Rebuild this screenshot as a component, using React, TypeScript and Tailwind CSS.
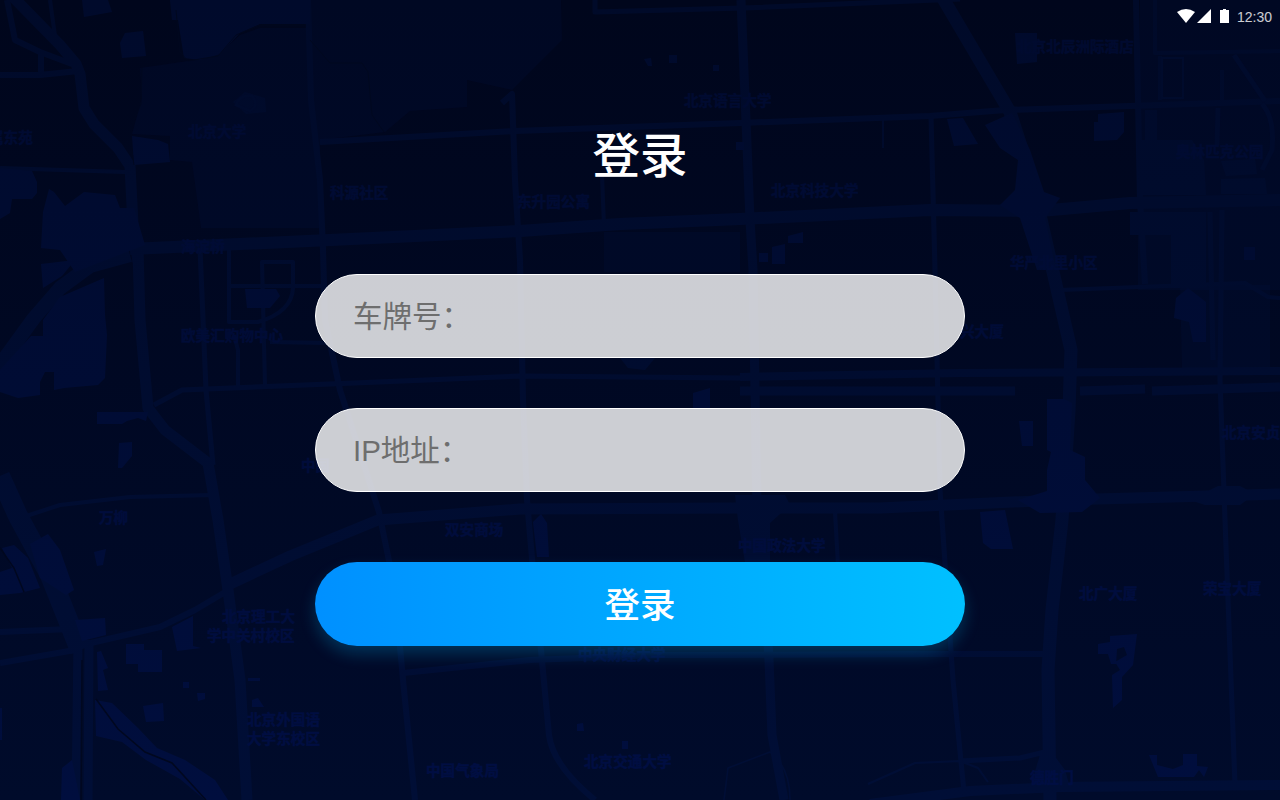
import React from "react";

type Road = { d: string; w: number };
type Label = { x: number; y: number; text: string };

const roads: Road[] = [
  { d: "M12 -4L60 45L76 64L80 74L84 108L94 124L118 148L130 166L133 225L138 262", w: 11 },
  { d: "M7 0L15 40L40 52L72 64", w: 6 },
  { d: "M50 0L55 36", w: 4 },
  { d: "M0 75H40L78 71", w: 6 },
  { d: "M41 54V74", w: 6 },
  { d: "M0 168L125 172", w: 4 },
  { d: "M308 0L311 100L320 180L323 250L325 320L340 390L356 440L379 512L395 590L403 680L415 800", w: 6 },
  { d: "M130 249L330 240L520 231L620 224L740 219L930 210L1040 211L1130 203L1280 200", w: 12 },
  { d: "M-4 370L34 318L60 288L90 266L130 255", w: 14 },
  { d: "M138 250L140 320L148 408L165 430L208 463L218 520L228 590L240 680L247 800", w: 11 },
  { d: "M154 405L182 390L330 384L520 376L740 378", w: 5 },
  { d: "M200 248L206 390L213 465", w: 5 },
  { d: "M229 250V322H258Q292 312 293 288V262H262L265 385", w: 4 },
  { d: "M229 286H325M234 335L238 350V386M270 342L330 343", w: 4 },
  { d: "M0 476L18 516L50 575L80 650", w: 20 },
  { d: "M14 520L60 505L130 497L213 495", w: 4 },
  { d: "M0 632L70 629M0 663L75 650", w: 6 },
  { d: "M78 642L76 800M89 640L88 800", w: 9 },
  { d: "M78 646L160 627L195 610L232 588", w: 6 },
  { d: "M230 584L290 556L378 520L520 509L740 508L880 508L1060 500L1280 494", w: 11 },
  { d: "M502 103L512 94L515 180L520 260L523 400L527 500L533 570L541 650L549 735Q553 766 595 800", w: 6 },
  { d: "M595 0V12L743 8L960 -1", w: 5 },
  { d: "M741 0L746 120L750 220L753 270L757 510L764 570L769 660L772 735L784 800", w: 9 },
  { d: "M320 142L515 131L740 123L930 116L1005 110L1100 107L1280 101", w: 6 },
  { d: "M602 175L604 226", w: 4 },
  { d: "M883 120V148", w: 2 },
  { d: "M931 116L935 270L940 490L953 680L964 792", w: 5 },
  { d: "M941 -5L1010 112L1032 180L1048 250L1071 350L1069 410L1062 520L1052 610L1048 670L1050 800", w: 13 },
  { d: "M1136 0L1140 200L1145 284", w: 6 },
  { d: "M1155 0V53L1280 51M1160 56V100M1222 70V100", w: 4 },
  { d: "M1060 290L1245 283L1268 297L1280 298", w: 4 },
  { d: "M1210 212L1213 360M1222 210L1220 380L1225 520L1235 785", w: 5 },
  { d: "M740 377L960 373L1280 371", w: 8 },
  { d: "M740 391H1015M1080 391L1145 389M1152 391L1280 387", w: 9 },
  { d: "M403 673L530 660L660 655L952 654H1045", w: 6 },
  { d: "M835 512L838 565", w: 4 },
  { d: "M870 804L970 791L1060 787L1280 785", w: 10 },
  { d: "M960 761L1020 758L1045 752", w: 5 },
  { d: "M868 784L915 763L960 761L978 768L988 782", w: 2 },
  { d: "M724 800L728 768L770 752Q790 767 790 800", w: 1.5 },
];

const parks = [
  "M140 68L195 60L220 53L240 35L260 28H308V0H561L562 40L512 90L467 80V107L410 111L385 132L320 140V228H201L192 162L170 160V136L132 134L142 98Z",
  "M604 232H740V272H604Z",
  "M1138 55H1280V290H1138Z",
  "M1180 285H1270V370H1182Z",
  "M1140 0H1280V55H1140Z",
];

const blocks = [
  "M82 0H108L112 12L84 17Z",
  "M125 33L143 31L146 56L122 58L120 43Z",
  "M170 0H310V24H260L240 33L220 54L200 60L184 58L178 20H172Z",
  "M132 136L158 140L168 144L170 162L134 165Z",
  "M0 168L32 171L37 182V193L32 199H12L10 213L0 219Z",
  "M49 189L54 192L65 206L84 192L115 195L120 208H134L145 245L75 272L60 250L41 248L43 212Z",
  "M41 264L75 260L62 276L43 288Z",
  "M104 278L105 315L107 335L105 378L98 385L64 388L54 390V372H45L40 382V395L18 398L0 392V370L31 336H43V320L60 297Z",
  "M97 412H148L146 421L138 418L127 421L122 424H97Z",
  "M119 443L132 442V456L122 468H118Z",
  "M2 548L14 545L28 558L40 588L20 593L0 595V572L12 568Z",
  "M48 534L60 550L74 590L66 595L40 578L30 544Z",
  "M94 552L106 549L103 565L97 566Z",
  "M75 620L105 618L106 635L82 641Z",
  "M126 644H144V650H162V672H138V664H126Z",
  "M172 627L193 616V646L201 648L177 651Z",
  "M143 706L163 703L164 721L146 722Z",
  "M183 682H189V688H183ZM197 693H205V699L198 701Z",
  "M95 700L112 703L138 728L157 748L185 760L215 780L228 800H205L180 779L146 760L122 742L96 736Z",
  "M97 652L101 651L108 668L103 670L108 690L98 691Z",
  "M62 768L72 760L80 800H61Z",
  "M0 708H2V740H0Z",
  "M245 289H276L280 296L270 308H247Z",
  "M947 119L963 118L978 144L954 146Z",
  "M985 125L1012 113L1030 150L1044 192L1060 198L1045 218L1056 270H1037L1020 218L1000 205L1015 190L1018 160L1000 148Z",
  "M1015 33H1037V62L1017 64Z",
  "M1098 114L1124 112V132L1117 140L1094 141V122H1098Z",
  "M1244 247H1255V260H1244Z",
  "M1176 298L1188 288L1206 302V342H1193L1189 322L1174 318Z",
  "M772 247L785 244V264H772ZM788 236L803 232V243H788ZM759 253H768V262H759Z",
  "M1019 421H1033V446H1022Z",
  "M1047 399H1064L1072 403L1070 450L1085 457V480L1100 498L1082 512L1040 513L1018 500L1047 491V470L1051 452L1047 450Z",
  "M980 512L1005 510L1013 549H991L983 543Z",
  "M1098 644L1110 642V636L1137 634L1133 665L1122 677V700L1113 708L1112 675L1120 670L1115 662L1127 655L1124 647L1117 649L1116 664H1111L1108 654H1098Z",
  "M1149 755H1157V765L1173 769L1183 765V754H1197V766L1208 767L1204 777L1199 770L1194 777H1158Z",
  "M533 522L541 514L547 523L549 557H537Z",
  "M693 393L710 388V408H693Z",
  "M669 55H677V63H669ZM644 59L651 58L652 66H648ZM713 65H719V71H713ZM736 142H744V150H736Z",
  "M577 724L583 723L584 731H577ZM622 741H628V749H622Z",
  "M252 700L258 698L264 707H252ZM248 678H260V681H248Z",
];

const softBlocks = [
  "M233 102L245 92L265 98L266 112L246 114Z",
  "M1145 110H1157V140H1192L1204 160L1206 195H1138V140H1145Z",
  "M1130 212H1206V288H1171V235H1130Z",
  "M1221 161L1255 159L1257 174L1226 176ZM1221 179L1265 178L1267 194H1221Z",
  "M735 495H785L790 505L770 523L770 562H745L738 520Z",
  "M620 358H655L645 370L628 368Z",
  "M1040 755L1050 750L1065 770L1070 788H1030Z",
  "M1190 500L1218 486H1240L1255 494L1240 505H1205Z",
];

const labels: Label[] = [
  { x: -11, y: 143, text: "属东苑" },
  { x: 188, y: 137, text: "北京大学" },
  { x: 181, y: 252, text: "海淀桥" },
  { x: 181, y: 341, text: "欧美汇购物中心" },
  { x: 99, y: 523, text: "万柳" },
  { x: 301, y: 471, text: "中国" },
  { x: 330, y: 198, text: "科源社区" },
  { x: 517, y: 207, text: "东升园公寓" },
  { x: 684, y: 106, text: "北京语言大学" },
  { x: 771, y: 196, text: "北京科技大学" },
  { x: 1017, y: 52, text: "北京北辰洲际酒店" },
  { x: 1176, y: 157, text: "奥林匹克公园" },
  { x: 1010, y: 268, text: "华严北里小区" },
  { x: 960, y: 337, text: "兴大厦" },
  { x: 1222, y: 438, text: "北京安贞医院" },
  { x: 222, y: 622, text: "北京理工大" },
  { x: 207, y: 641, text: "学中关村校区" },
  { x: 247, y: 725, text: "北京外国语" },
  { x: 247, y: 744, text: "大学东校区" },
  { x: 445, y: 535, text: "双安商场" },
  { x: 738, y: 551, text: "中国政法大学" },
  { x: 578, y: 660, text: "中央财经大学" },
  { x: 584, y: 767, text: "北京交通大学" },
  { x: 426, y: 776, text: "中国气象局" },
  { x: 1079, y: 599, text: "北广大厦" },
  { x: 1203, y: 594, text: "荣宝大厦" },
  { x: 1030, y: 783, text: "德胜门" },
];

function MapBackdrop() {
  return (
    <svg
      aria-hidden="true"
      className="pointer-events-none absolute inset-0 h-full w-full"
      viewBox="0 0 1280 800"
      preserveAspectRatio="xMidYMid slice"
    >
      <defs>
        <linearGradient id="road" gradientUnits="userSpaceOnUse" x1="0" y1="0" x2="0" y2="800">
          <stop offset="0" stopColor="#000a29" />
          <stop offset="1" stopColor="#000e36" />
        </linearGradient>
        <linearGradient id="block" gradientUnits="userSpaceOnUse" x1="0" y1="0" x2="0" y2="800">
          <stop offset="0" stopColor="#000a2b" />
          <stop offset="1" stopColor="#000e3e" />
        </linearGradient>
        <linearGradient id="label" gradientUnits="userSpaceOnUse" x1="0" y1="0" x2="0" y2="800">
          <stop offset="0" stopColor="#000a2e" />
          <stop offset="1" stopColor="#000e43" />
        </linearGradient>
      </defs>
      <g fill="#001040" fillOpacity="0.22">
        {parks.map((d) => (
          <path key={d} d={d} />
        ))}
      </g>
      <g fill="none" stroke="url(#road)" strokeLinejoin="round">
        {roads.map((r) => (
          <path key={r.d} d={r.d} strokeWidth={r.w} />
        ))}
      </g>
      <g fill="url(#block)">
        {blocks.map((d) => (
          <path key={d} d={d} />
        ))}
      </g>
      <g fill="url(#road)">
        {softBlocks.map((d) => (
          <path key={d} d={d} />
        ))}
      </g>
      <g fill="none" stroke="#00081f" strokeWidth="1.5">
        <path d="M96 699L118 729L145 752L172 763L206 800M82 660L81 800M0 548L14 568L24 592" />
        <path d="M176 10L180 52L188 61L218 56L236 35L260 25H306M142 67L141 104L129 131L134 165" strokeWidth="1" />
        <path d="M310 40L330 63H362L368 72L372 115L384 132" strokeWidth="1" />
      </g>
      <g fill="none" stroke="#000b2c" strokeWidth="5">
        <path d="M1262 104Q1275 118 1272 150L1262 170M1218 108L1217 145M1234 55L1265 101" />
        <path d="M1162 58H1183V98H1162Z" strokeWidth="2" />
        <path d="M236 105Q240 94 252 96Q260 105 250 111Z" strokeWidth="3" />
      </g>
      <g
        fill="url(#label)"
        stroke="url(#label)"
        strokeWidth="0.4"
        fontSize="14.6"
        fontWeight="700"
        className="font-['Noto_Sans_CJK_SC',sans-serif]"
      >
        {labels.map((l) => (
          <text key={l.text} x={l.x} y={l.y}>
            {l.text}
          </text>
        ))}
      </g>
    </svg>
  );
}

function StatusBar() {
  return (
    <header className="flex h-8 items-center justify-end pr-2 text-white">
      <svg className="h-[14px] w-[18px]" viewBox="0 0 18 14" fill="currentColor">
        <path d="M9 14L0 3Q9 -3 18 3Z" />
      </svg>
      <svg className="ml-0.5 h-[14px] w-[14px]" viewBox="0 0 14 14" fill="currentColor">
        <path d="M14 0V14H0Z" />
      </svg>
      <svg className="ml-[9px] h-[14px] w-[9px]" viewBox="0 0 9 14" fill="currentColor">
        <path d="M3 0H6V1H9V14H0V1H3Z" />
      </svg>
      <span className="ml-2 pt-0.5 text-sm leading-5 text-white/80">12:30</span>
    </header>
  );
}

function Field({ label }: { label: string }) {
  return (
    <input
      aria-label={label}
      placeholder={label}
      className="h-[84px] w-full rounded-full border border-white bg-white/80 px-[37px] pt-0.5 font-['Liberation_Sans','Noto_Sans_CJK_SC',sans-serif] text-[29.5px] text-[#333] outline-none placeholder:font-normal placeholder:text-[#6e6e6e] placeholder:opacity-100"
    />
  );
}

export default function App() {
  return (
    <div className="relative flex h-screen min-h-[800px] w-full flex-col overflow-hidden bg-linear-to-b from-[#00061c] to-[#000b2b] font-['Liberation_Sans','Noto_Sans_CJK_SC',sans-serif]">
      <MapBackdrop />
      <div className="relative flex flex-1 flex-col">
        <StatusBar />
        <main className="mx-auto flex w-[650px] flex-col items-center pt-[89px]">
          <h1 className="text-[47.5px] leading-[72px] font-medium text-white">登录</h1>
          <form className="mt-[81px] flex w-full flex-col" onSubmit={(e: React.FormEvent) => e.preventDefault()}>
            <div className="flex flex-col gap-[50px]">
              <Field label="车牌号：" />
              <Field label="IP地址：" />
            </div>
            <button
              type="submit"
              className="mt-[70px] h-[84px] w-full rounded-full bg-linear-to-r from-[#0090ff] to-[#00c0ff] pt-1.5 text-[35.5px] font-medium text-white shadow-[0_8px_16px_rgba(0,192,255,0.22)]"
            >
              登录
            </button>
          </form>
        </main>
      </div>
    </div>
  );
}
